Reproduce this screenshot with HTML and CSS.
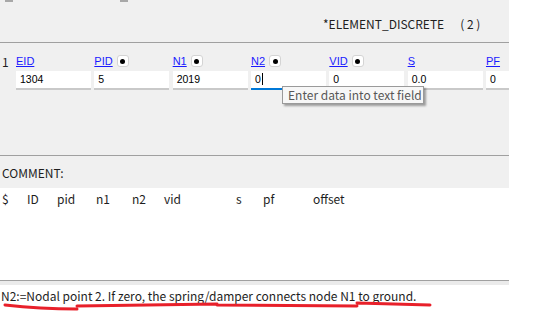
FILE: index.html
```html
<!DOCTYPE html>
<html lang="en">
<head>
    <meta charset="UTF-8">
    <title>ELEMENT_DISCRETE</title>
    <link rel="stylesheet" href="styles.css">
</head>
<body>
    <div class="panel">
        <div class="header">
            <div class="stubs">
                <span class="stub"></span>
                <span class="stub stub-2"></span>
            </div>
            <div class="title">*ELEMENT_DISCRETE<span class="count">( 2 )</span></div>
        </div>

        <div class="card">
            <div class="row-no">1</div>
            <div class="fields">
                <div class="field">
                    <div class="label"><a href="#">EID</a></div>
                    <div class="input">1304</div>
                </div>
                <div class="field">
                    <div class="label"><a href="#">PID</a><span class="pick"></span></div>
                    <div class="input">5</div>
                </div>
                <div class="field">
                    <div class="label"><a href="#">N1</a><span class="pick"></span></div>
                    <div class="input">2019</div>
                </div>
                <div class="field">
                    <div class="label"><a href="#">N2</a><span class="pick"></span></div>
                    <div class="input focus">0<span class="caret"></span></div>
                </div>
                <div class="field">
                    <div class="label"><a href="#">VID</a><span class="pick"></span></div>
                    <div class="input">0</div>
                </div>
                <div class="field">
                    <div class="label"><a href="#">S</a></div>
                    <div class="input">0.0</div>
                </div>
                <div class="field">
                    <div class="label"><a href="#">PF</a></div>
                    <div class="input">0</div>
                </div>
            </div>
            <div class="tooltip">Enter data into text field</div>
        </div>

        <div class="comment-label">COMMENT:</div>
        <div class="comment">
            <div class="comment-line">
                <span>$</span><span>ID</span><span>pid</span><span>n1</span><span>n2</span>
                <span>vid</span><span>s</span><span>pf</span><span>offset</span>
            </div>
        </div>

        <div class="help">
            N2:=Nodal point 2. If zero, the spring/damper connects node N1 to ground.
            <svg class="scribble" width="440" height="14" viewBox="0 300 440 14">
                <path d="M5 305 Q40 309 77 309 M77 306 L217 304 M217 305 L357 306 M357 303 L430 305"
                      fill="none" stroke="#e8202a" stroke-width="3" stroke-linecap="round"/>
            </svg>
        </div>
    </div>
</body>
</html>
```

FILE: styles.css
```css
body, html {
    margin: 0;
    padding: 0;
    background: #ffffff;
    font-family: "Noto Sans CJK SC", "Liberation Sans", sans-serif;
    font-size: 12px;
    color: #1e1e1e;
}
.panel {
    width: 509px;
    height: 335px;
    overflow: hidden;
    background: #f0f0f0;
    display: flex;
    flex-direction: column;
}
.header {
    height: 42px;
    border-bottom: 1px solid #a0a0a0;
    display: flex;
    flex-direction: column;
}
.stubs {
    display: flex;
    height: 3px;
    padding-left: 5px;
}
.stub {
    width: 8px;
    height: 2px;
    background: #a8a8a8;
}
.stub-2 {
    margin-left: 107px;
}
.title {
    padding-left: 323px;
    margin-top: 13px;
    line-height: 16px;
}
.count {
    margin-left: 16px;
}
.card {
    position: relative;
    height: 112px;
    border-bottom: 1px solid #a0a0a0;
    display: flex;
    font-family: "Liberation Sans", sans-serif;
    font-size: 11px;
}
.row-no {
    flex-shrink: 0;
    width: 16px;
    padding-left: 2px;
    box-sizing: border-box;
    margin-top: 10px;
    font-family: "Noto Sans CJK SC", sans-serif;
    font-size: 12px;
}
.fields {
    flex-shrink: 0;
    display: grid;
    grid-template-columns: repeat(7, 75px);
    column-gap: 3.33px;
    align-content: start;
    padding-top: 12px;
}
.label {
    height: 12px;
    display: flex;
    align-items: center;
    gap: 4px;
}
.label a {
    color: #1a1aff;
    text-decoration: underline;
    line-height: 12px;
}
.pick {
    width: 10px;
    height: 10px;
    border: 1px solid #d4d4d4;
    border-radius: 3px;
    background: #ffffff;
    display: flex;
    align-items: center;
    justify-content: center;
}
.pick::after {
    content: "";
    width: 5px;
    height: 5px;
    border-radius: 50%;
    background: #000000;
}
.input {
    margin-top: 4px;
    height: 17px;
    line-height: 17px;
    padding-left: 4px;
    background: #ffffff;
    border-bottom: 2px solid #c9c9c9;
    font-size: 10.5px;
    color: #000000;
}
.input.focus {
    border-bottom-color: #0078d7;
}
.caret {
    display: inline-block;
    width: 1px;
    height: 12px;
    margin-left: 1px;
    background: #000000;
    vertical-align: -2px;
}
.tooltip {
    position: absolute;
    left: 282px;
    top: 43px;
    width: 142px;
    height: 18px;
    box-sizing: border-box;
    padding-left: 5px;
    line-height: 16px;
    background: #f7f7f7;
    border: 1px solid #9a9a9a;
    box-shadow: 2px 2px 2px rgba(0, 0, 0, 0.35);
    color: #575757;
    font-family: "Noto Sans CJK SC", sans-serif;
    font-size: 12px;
}
.comment-label {
    height: 32px;
    line-height: 34px;
    padding-left: 2px;
}
.comment {
    background: #ffffff;
    height: 92px;
    border-bottom: 1px solid #a0a0a0;
}
.comment-line {
    display: grid;
    grid-template-columns: 25px 30px 39px 36px 32px 72px 27px 50px auto;
    padding-left: 2px;
    line-height: 22px;
}
.help {
    position: relative;
    flex: 1;
    background: #ffffff;
    border-top: 4px solid #ebebeb;
    padding-left: 1px;
    line-height: 22px;
    white-space: nowrap;
}
.scribble {
    position: absolute;
    left: 0;
    top: 15px;
}
```
